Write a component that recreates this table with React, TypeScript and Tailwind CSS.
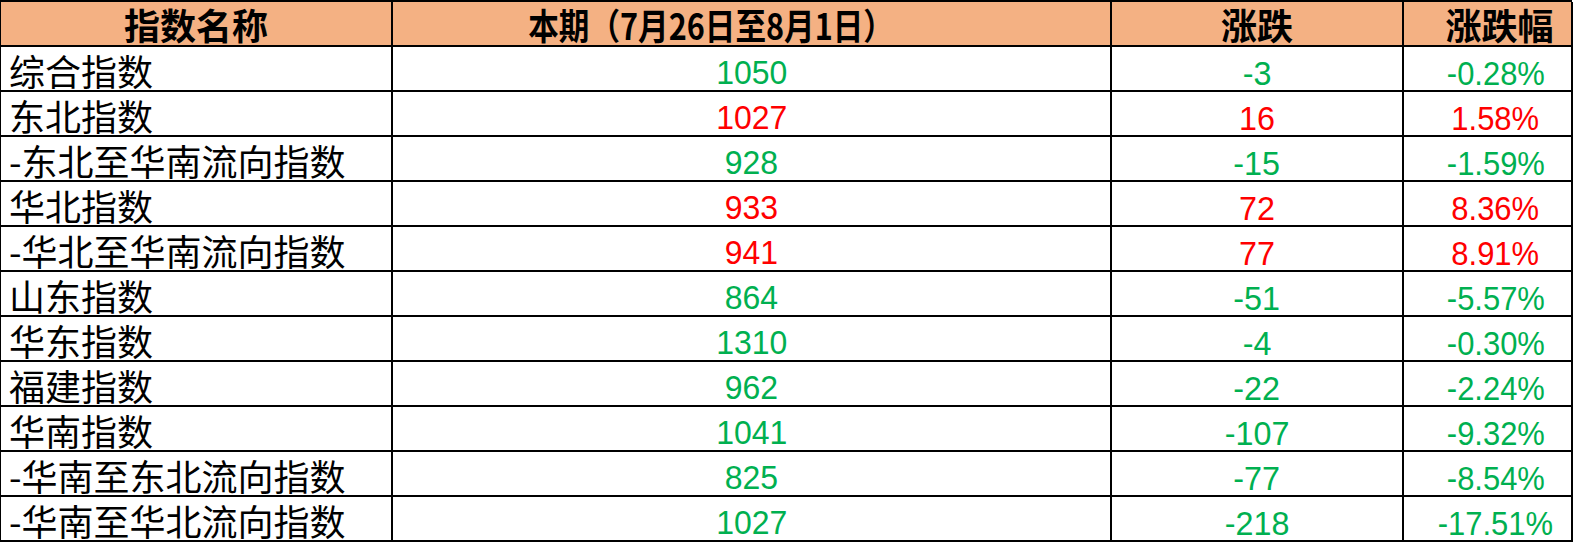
const rows: { name: string; value: string; change: string; pct: string; up: boolean }[] = [
  { name: "综合指数", value: "1050", change: "-3", pct: "-0.28%", up: false },
  { name: "东北指数", value: "1027", change: "16", pct: "1.58%", up: true },
  { name: "-东北至华南流向指数", value: "928", change: "-15", pct: "-1.59%", up: false },
  { name: "华北指数", value: "933", change: "72", pct: "8.36%", up: true },
  { name: "-华北至华南流向指数", value: "941", change: "77", pct: "8.91%", up: true },
  { name: "山东指数", value: "864", change: "-51", pct: "-5.57%", up: false },
  { name: "华东指数", value: "1310", change: "-4", pct: "-0.30%", up: false },
  { name: "福建指数", value: "962", change: "-22", pct: "-2.24%", up: false },
  { name: "华南指数", value: "1041", change: "-107", pct: "-9.32%", up: false },
  { name: "-华南至东北流向指数", value: "825", change: "-77", pct: "-8.54%", up: false },
  { name: "-华南至华北流向指数", value: "1027", change: "-218", pct: "-17.51%", up: false },
]

const cjk = "font-['Noto_Sans_CJK_SC',sans-serif]"
const num = "font-['Liberation_Sans','Noto_Sans_CJK_SC',sans-serif]"

export default function App() {
  return (
    <div className="h-[543px] w-[1585px] bg-white">
      <div className="grid w-[1572px] grid-cols-[392px_719px_292px_169px] border-l border-t-2 border-black">
        <div className={`flex h-[45px] items-center justify-center border-b-2 border-r-2 border-black bg-[#f4b183] text-[36px] font-bold leading-none text-black ${cjk}`}>
          指数名称
        </div>
        <div className={`flex h-[45px] items-center justify-center border-b-2 border-r-2 border-black bg-[#f4b183] pr-[80px] text-[36px] font-bold leading-none text-black ${cjk}`}>
          <span className="inline-block scale-x-[0.85]">本期（7月26日至8月1日）</span>
        </div>
        <div className={`flex h-[45px] items-center justify-center border-b-2 border-r-2 border-black bg-[#f4b183] text-[36px] font-bold leading-none text-black ${cjk}`}>
          涨跌
        </div>
        <div className={`flex h-[45px] items-center justify-center border-b-2 border-r-2 border-black bg-[#f4b183] pl-[24px] text-[36px] font-bold leading-none text-black ${cjk}`}>
          涨跌幅
        </div>
        {rows.map((r) => {
          const color = r.up ? "text-[#ff0000]" : "text-[#00b050]"
          return (
            <div key={r.name} className="contents">
              <div className={`flex h-[45px] items-center border-b-2 border-r-2 border-black pl-[8px] pt-[2px] text-[36px] leading-none text-black ${cjk}`}>
                {r.name}
              </div>
              <div className={`flex h-[45px] items-center justify-center border-b-2 border-r-2 border-black pt-[7px] text-[34px] leading-none ${color} ${num}`}>
                <span className="inline-block scale-x-[0.94]">{r.value}</span>
              </div>
              <div className={`flex h-[45px] items-center justify-center border-b-2 border-r-2 border-black pt-[8px] text-[34px] leading-none ${color} ${num}`}>
                <span className="inline-block scale-x-[0.95]">{r.change}</span>
              </div>
              <div className={`flex h-[45px] items-center justify-center border-b-2 border-r-2 border-black pl-[16px] pt-[8px] text-[34px] leading-none ${color} ${num}`}>
                <span className="inline-block scale-x-[0.91]">{r.pct}</span>
              </div>
            </div>
          )
        })}
      </div>
    </div>
  )
}
